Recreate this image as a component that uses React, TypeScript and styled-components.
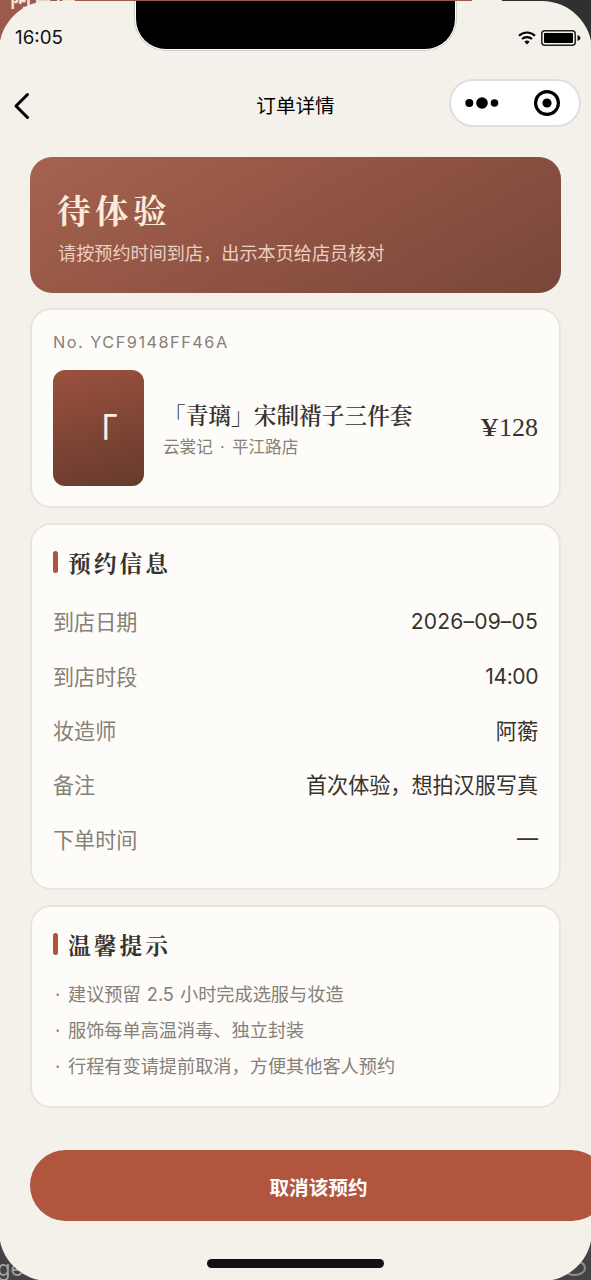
import React from "react";
import styled, { createGlobalStyle } from "styled-components";

const sans = `"Inter", "Noto Sans CJK SC", sans-serif`;
const serif = `"Liberation Serif", "Noto Serif CJK SC", "Noto Sans CJK SC", serif`;

const GlobalStyle = createGlobalStyle`
  * { box-sizing: border-box; }
  body { margin: 0; background: #3a3a3c; font-family: ${sans}; overflow: hidden; }
`;

const Desktop = styled.div`
  position: relative;
  width: 591px;
  height: 1280px;
  overflow: hidden;
  background: linear-gradient(#303033, #444446);
`;

const BackdropBanner = styled.div`
  position: absolute;
  left: 0;
  top: 0;
  width: 502px;
  height: 60px;
  background: linear-gradient(90deg, #9a5a4c 472px, #f5f2ec 472px);
`;

const BackdropTitle = styled.span`
  position: absolute;
  left: 10px;
  top: -17px;
  font: 700 22px/30px ${sans};
  color: #f3e4d8;
`;

const BackdropText = styled.span`
  position: absolute;
  left: -3px;
  top: 1255px;
  font: 400 22px/26px ${sans};
  color: #a3a3a3;
`;

const BackdropRing = styled.span`
  position: absolute;
  left: 563px;
  top: 1260px;
  width: 23px;
  height: 16px;
  border: 2px solid #8d8d8f;
  border-radius: 50%;
`;

const Screen = styled.div`
  position: relative;
  width: 593px;
  height: 1280px;
  margin: 1px -1px 0;
  padding: 0 1px;
  border-radius: 50px;
  background: #f4f1eb;
  overflow: hidden;
  display: flex;
  flex-direction: column;
`;

const Notch = styled.div`
  position: absolute;
  left: 137px;
  top: 0;
  width: 319px;
  height: 48px;
  border-radius: 0 0 30px 30px;
  background: #000;
  box-shadow: 0 0 0 1px #fff, 0 0 0 2px #d0cecb;
`;

const StatusBar = styled.div`
  height: 75px;
  flex: none;
  display: flex;
  align-items: center;
  justify-content: space-between;
  padding: 0 10px 3px 15px;
`;

const Clock = styled.span`
  padding-top: 2px;
  font-size: 18.8px;
  line-height: 24px;
  color: #111;
`;

const StatusIcons = styled.div`
  display: flex;
  align-items: center;
  gap: 5px;
  padding-top: 1px;
`;

const NavBar = styled.header`
  flex: none;
  height: 58px;
  display: grid;
  grid-template-columns: 1fr auto 1fr;
  align-items: center;
  padding: 0 10px 4px 12px;
`;

const NavTitle = styled.h1`
  margin: 6px 2px 0 0;
  font-size: 19.6px;
  line-height: 28px;
  font-weight: 400;
  color: #000;
`;

const BackIcon = styled.svg`
  display: block;
  margin-top: 6px;
`;

const Capsule = styled.div`
  justify-self: end;
  width: 132px;
  height: 48px;
  border: 2px solid #e0dfdd;
  border-radius: 24px;
  background: #fff;
`;

const Content = styled.main`
  padding: 23px 30px 0;
  display: flex;
  flex-direction: column;
  gap: 15px;
`;

const Hero = styled.section`
  height: 136px;
  padding: 30px 27px;
  border-radius: 22px;
  background: linear-gradient(150deg, #a5634f 0%, #965746 38%, #78463a 100%);
`;

const HeroTitle = styled.h2`
  margin: 0;
  font: 700 33.5px/50px ${serif};
  letter-spacing: 4.5px;
  color: #faebdc;
`;

const HeroText = styled.p`
  margin: 2px 0 0 1px;
  font-size: 18.15px;
  line-height: 28px;
  color: #eccfc1;
`;

const Card = styled.section<{ $height: number }>`
  height: ${(p) => p.$height}px;
  padding: 20px 21px;
  border: 2px solid #e8e5df;
  border-radius: 21px;
  background: #fefcf8;
`;

const OrderNumber = styled.div`
  font-size: 16.3px;
  line-height: 24px;
  letter-spacing: 1.5px;
  color: #858078;
`;

const Product = styled.div`
  display: flex;
  align-items: center;
  margin-top: 16px;
`;

const Thumbnail = styled.div`
  flex: none;
  width: 91px;
  height: 116px;
  padding-top: 3px;
  border-radius: 12px;
  background: linear-gradient(165deg, #9b513e, #663a2d);
  display: grid;
  place-items: center;
  font: 400 39px/50px "Noto Sans CJK SC", sans-serif;
  color: #fbeee5;
`;

const ProductInfo = styled.div`
  flex: 1;
  margin-left: 19px;
`;

const ProductName = styled.div`
  margin-top: 4px;
  font: 600 22.7px/32px ${serif};
  color: #36332f;
`;

const ProductShop = styled.div`
  font-size: 16.6px;
  line-height: 24px;
  margin-top: 2px;
  word-spacing: 2.5px;
  color: #858078;
`;

const Price = styled.div`
  font: 400 26px/34px ${serif};
  color: #36332f;
`;

const Currency = styled.span`
  display: inline-block;
  margin-right: 3px;
  transform: scaleX(1.35);
`;

const SectionTitle = styled.h3`
  display: flex;
  align-items: center;
  gap: 10px;
  margin: -2px 0 0;
  font: 700 22.7px/34px ${serif};
  letter-spacing: 3.1px;
  color: #36332f;

  &::before {
    content: "";
    width: 5px;
    height: 22px;
    border-radius: 3px;
    background: #b1543e;
  }
`;

const SectionName = styled.span`
  padding-top: 5px;
  margin-bottom: -1px;
`;

const Details = styled.dl`
  margin: 13px 0 0;
`;

const DetailRow = styled.div`
  display: flex;
  justify-content: space-between;
  align-items: center;
  height: 54.4px;
  font-size: 21.1px;
`;

const DetailLabel = styled.dt`
  color: #858078;
`;

const DetailValue = styled.dd<{ $tracking?: number }>`
  margin: 0;
  padding-top: ${(p) => (p.$tracking ? 1.5 : 0)}px;
  letter-spacing: ${(p) => p.$tracking ?? 0}px;
  color: #36332f;
`;

const Tips = styled.div`
  margin-top: 13px;
  font-size: 18.18px;
  line-height: 36px;
  word-spacing: 1px;
  color: #858078;
`;

const Tip = styled.div`
  display: flex;
`;

const TipDot = styled.span`
  width: 15px;
  padding-left: 2px;
`;

const CancelButton = styled.button`
  width: 577px;
  height: 71px;
  flex: none;
  margin-top: 27px;
  padding: 4px 0 0;
  border: 0;
  border-radius: 36px;
  background: #b1553f;
  color: #fff;
  font: 700 19.6px/28px ${sans};
`;

const HomeIndicator = styled.div`
  position: absolute;
  left: 208px;
  top: 1258px;
  width: 177px;
  height: 9px;
  border-radius: 5px;
  background: #111;
`;

const details: { label: string; value: string; tracking?: number }[] = [
  { label: "到店日期", value: "2026–09–05", tracking: 0.15 },
  { label: "到店时段", value: "14:00", tracking: -0.45 },
  { label: "妆造师", value: "阿蘅" },
  { label: "备注", value: "首次体验，想拍汉服写真" },
  { label: "下单时间", value: "—" },
];

const tips = [
  "建议预留 2.5 小时完成选服与妆造",
  "服饰每单高温消毒、独立封装",
  "行程有变请提前取消，方便其他客人预约",
];

export default function App() {
  return (
    <Desktop>
      <GlobalStyle />
      <BackdropBanner />
      <BackdropTitle>阿青璃</BackdropTitle>
      <BackdropText>ge</BackdropText>
      <BackdropRing />
      <Screen>
        <Notch />
        <StatusBar>
          <Clock>16:05</Clock>
          <StatusIcons>
            <svg width="18" height="14" viewBox="0 0 18 14" fill="none" stroke="#000" strokeWidth="2.2">
              <path d="M1 4.7C5.5.4 12.5.4 17 4.7" />
              <path d="M4 8C6.8 5.4 11.2 5.4 14 8" />
              <path d="M6.4 10.7Q9 8.5 11.6 10.7L9 13.4Z" fill="#000" stroke="none" />
            </svg>
            <svg width="40" height="16" viewBox="0 0 40 16">
              <rect x=".8" y=".8" width="33.4" height="14.4" rx="3" fill="none" stroke="#222" strokeWidth="1.5" />
              <rect x="3" y="3" width="29" height="10" rx="1" fill="#000" />
              <path d="M36.5 5Q39.5 5.8 39.5 8T36.5 11Z" fill="#111" />
            </svg>
          </StatusIcons>
        </StatusBar>
        <NavBar>
          <BackIcon width="20" height="28" viewBox="0 0 20 28" fill="none" stroke="#000" strokeWidth="3">
            <path d="M15.5 2.5L4 14L15.5 25.5" strokeLinecap="round" strokeLinejoin="round" />
          </BackIcon>
          <NavTitle>订单详情</NavTitle>
          <Capsule>
            <svg width="128" height="44" viewBox="0 0 128 44">
              <circle cx="18.3" cy="22" r="4" />
              <circle cx="31" cy="22" r="5.8" />
              <circle cx="43.5" cy="22" r="3.8" />
              <circle cx="96" cy="22" r="11.4" fill="none" stroke="#000" strokeWidth="3.2" />
              <circle cx="96" cy="22" r="4.6" />
            </svg>
          </Capsule>
        </NavBar>
        <Content>
          <Hero>
            <HeroTitle>待体验</HeroTitle>
            <HeroText>请按预约时间到店，出示本页给店员核对</HeroText>
          </Hero>
          <Card $height={200}>
            <OrderNumber>No. YCF9148FF46A</OrderNumber>
            <Product>
              <Thumbnail>「</Thumbnail>
              <ProductInfo>
                <ProductName>「青璃」宋制褙子三件套</ProductName>
                <ProductShop>云裳记 · 平江路店</ProductShop>
              </ProductInfo>
              <Price>
                <Currency>¥</Currency>128
              </Price>
            </Product>
          </Card>
          <Card $height={367}>
            <SectionTitle>
              <SectionName>预约信息</SectionName>
            </SectionTitle>
            <Details>
              {details.map(({ label, value, tracking }) => (
                <DetailRow key={label}>
                  <DetailLabel>{label}</DetailLabel>
                  <DetailValue $tracking={tracking}>{value}</DetailValue>
                </DetailRow>
              ))}
            </Details>
          </Card>
          <Card $height={203}>
            <SectionTitle>
              <SectionName>温馨提示</SectionName>
            </SectionTitle>
            <Tips>
              {tips.map((tip) => (
                <Tip key={tip}>
                  <TipDot>·</TipDot>
                  {tip}
                </Tip>
              ))}
            </Tips>
          </Card>
          <CancelButton>取消该预约</CancelButton>
        </Content>
        <HomeIndicator />
      </Screen>
    </Desktop>
  );
}
